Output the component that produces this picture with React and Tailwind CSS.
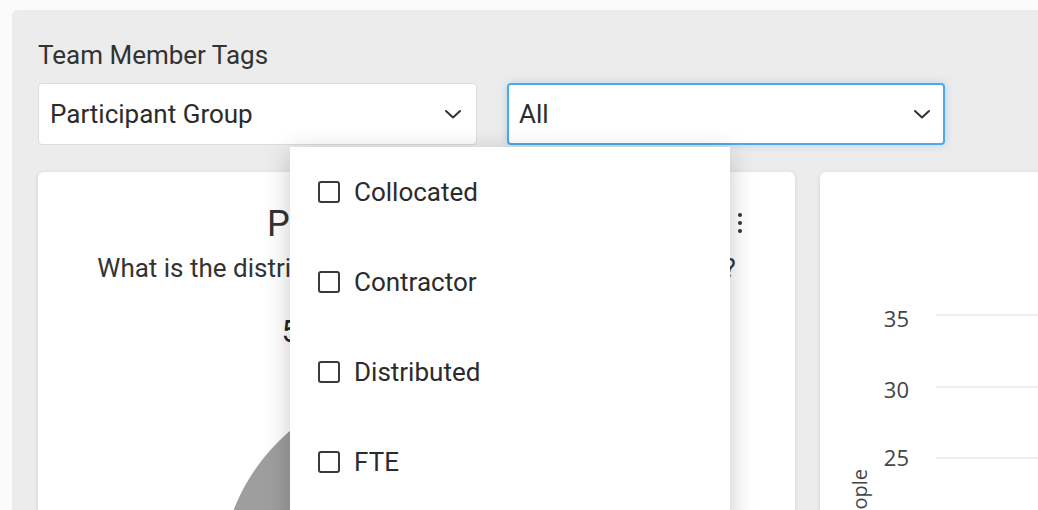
import React from 'react'

const Chevron = () => (
	<svg width="18" height="10" viewBox="0 0 18 10" fill="none">
		<path d="M2 2l7 6.5L16 2" stroke="#333" strokeWidth="2" strokeLinecap="round" strokeLinejoin="round" />
	</svg>
)

const options = ['Collocated', 'Contractor', 'Distributed', 'FTE', 'Intern']

const App = () => {
	return (
		<div className="w-[1038px] h-[510px] overflow-hidden bg-[#fbfbfb] pt-[10px] pl-[12px] font-['Roboto',sans-serif] text-[#2b2b2b]">
			<div className="relative w-[1100px] h-[520px] bg-[#ececec] rounded-tl-[6px] pl-[26px] pt-[31px]">
				<div className="text-[26px] leading-[28px] text-[#333]">Team Member Tags</div>

				<div className="flex items-center gap-[30px] mt-[14px]">
					<div className="w-[439px] h-[62px] shrink-0 bg-white border border-[#dcdcdc] rounded-[4px] flex items-center justify-between pl-[11px] pr-[14px]">
						<span className="text-[26px]">Participant Group</span>
						<Chevron />
					</div>
					<div className="w-[438px] h-[62px] shrink-0 bg-white border-2 border-[#4ea8ea] rounded-[4px] shadow-[0_0_8px_rgba(78,168,234,0.35)] flex items-center justify-between pl-[10px] pr-[12px]">
						<span className="text-[26px]">All</span>
						<Chevron />
					</div>
				</div>

				<div className="flex gap-[25px] mt-[27px]">
					<div className="relative w-[757px] h-[400px] shrink-0 bg-white rounded-[6px] shadow-[0_1px_4px_rgba(0,0,0,0.12)] overflow-hidden flex flex-col items-center pt-[30px]">
						<div className="text-[36px] leading-[44px] text-[#333] whitespace-nowrap">Participant Groups</div>
						<div className="text-[26px] leading-[32px] mt-[6px] text-[#333] whitespace-nowrap">What is the distribution of participants across the tags?</div>
						<div className="text-[31px] leading-[38px] mt-[29px] text-[#222] whitespace-nowrap tracking-[0.8px]">55 Team Members</div>
						<svg width="757" height="420" className="mt-[28px] shrink-0">
							<circle cx="380" cy="203" r="198" fill="#9e9e9e" />
						</svg>
						<div className="absolute top-[41px] right-[53px] flex flex-col gap-[4px]">
							<span className="w-[4px] h-[4px] rounded-full bg-[#333]" />
							<span className="w-[4px] h-[4px] rounded-full bg-[#333]" />
							<span className="w-[4px] h-[4px] rounded-full bg-[#333]" />
						</div>
					</div>

					<div className="w-[400px] h-[400px] shrink-0 bg-white rounded-[6px] shadow-[0_1px_4px_rgba(0,0,0,0.12)] overflow-hidden">
						<svg width="400" height="400" className="font-['Open_Sans',sans-serif]">
							<g fill="#444" fontSize="22" textAnchor="end">
								<text x="89" y="155">35</text>
								<text x="89" y="226">30</text>
								<text x="89" y="294">25</text>
							</g>
							<g stroke="#e8e8e8" strokeWidth="1.5">
								<line x1="116" y1="143" x2="400" y2="143" />
								<line x1="116" y1="215" x2="400" y2="215" />
								<line x1="116" y1="286" x2="400" y2="286" />
							</g>
							<text transform="translate(47,297) rotate(-90)" textAnchor="end" fontSize="20" fill="#444">People</text>
						</svg>
					</div>
				</div>

				<div className="absolute left-[278px] top-[137px] w-[440px] h-[400px] bg-white shadow-[0_6px_24px_rgba(0,0,0,0.22)]">
					{options.map((opt) => (
						<div key={opt} className="h-[90px] flex items-center pl-[28px] gap-[14px]">
							<span className="w-[22px] h-[22px] border-2 border-[#3a3a3a] rounded-[3px]" />
							<span className="text-[26px] text-[#2b2b2b]">{opt}</span>
						</div>
					))}
				</div>
			</div>
		</div>
	)
}

export default App
